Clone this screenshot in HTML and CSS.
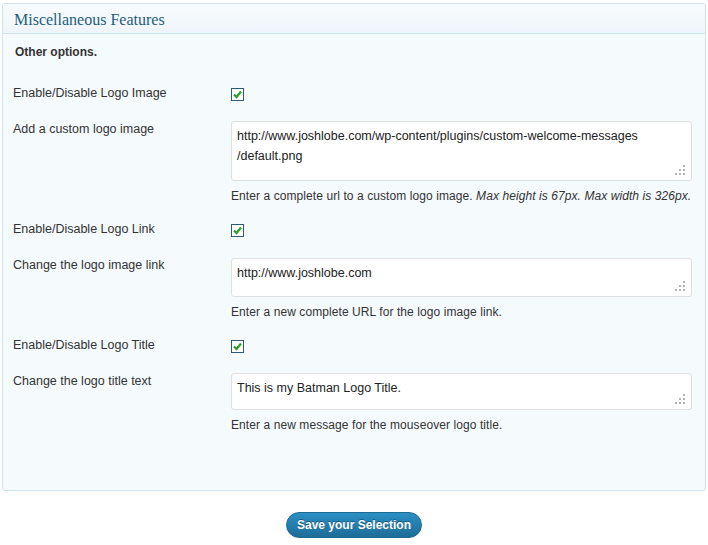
FILE: index.html
```html
<!DOCTYPE html>
<html>
<head>
<meta charset="utf-8">
<link rel="stylesheet" href="styles.css">
</head>
<body>
<div class="panel">
  <div class="panel-head"><h3>Miscellaneous Features</h3></div>
  <div class="panel-body">
    <p class="intro">Other options.</p>

    <div class="row row-check">
      <div class="label">Enable/Disable Logo Image</div>
      <div class="field"><span class="check"><svg viewBox="0 0 11 11" width="11" height="11"><path d="M2 5.5 L4.5 8 L9 2.5" fill="none" stroke="#2aa125" stroke-width="2.2"/></svg></span></div>
    </div>

    <div class="row row-text">
      <div class="label">Add a custom logo image</div>
      <div class="field">
        <div class="textarea ta-tall">http://www.joshlobe.com/wp-content/plugins/custom-welcome-messages<br>/default.png<svg class="grip" viewBox="0 0 10 10" width="10" height="10"><rect x="8" y="0" width="2" height="2"/><rect x="4" y="4" width="2" height="2"/><rect x="8" y="4" width="2" height="2"/><rect x="0" y="8" width="2" height="2"/><rect x="4" y="8" width="2" height="2"/><rect x="8" y="8" width="2" height="2"/></svg></div>
        <div class="desc">Enter a complete url to a custom logo image. <em>Max height is 67px. Max width is 326px.</em></div>
      </div>
    </div>

    <div class="row row-check">
      <div class="label">Enable/Disable Logo Link</div>
      <div class="field"><span class="check"><svg viewBox="0 0 11 11" width="11" height="11"><path d="M2 5.5 L4.5 8 L9 2.5" fill="none" stroke="#2aa125" stroke-width="2.2"/></svg></span></div>
    </div>

    <div class="row row-text">
      <div class="label">Change the logo image link</div>
      <div class="field">
        <div class="textarea ta-mid">http://www.joshlobe.com<svg class="grip" viewBox="0 0 10 10" width="10" height="10"><rect x="8" y="0" width="2" height="2"/><rect x="4" y="4" width="2" height="2"/><rect x="8" y="4" width="2" height="2"/><rect x="0" y="8" width="2" height="2"/><rect x="4" y="8" width="2" height="2"/><rect x="8" y="8" width="2" height="2"/></svg></div>
        <div class="desc">Enter a new complete URL for the logo image link.</div>
      </div>
    </div>

    <div class="row row-check">
      <div class="label">Enable/Disable Logo Title</div>
      <div class="field"><span class="check"><svg viewBox="0 0 11 11" width="11" height="11"><path d="M2 5.5 L4.5 8 L9 2.5" fill="none" stroke="#2aa125" stroke-width="2.2"/></svg></span></div>
    </div>

    <div class="row row-text">
      <div class="label">Change the logo title text</div>
      <div class="field">
        <div class="textarea ta-short">This is my Batman Logo Title.<svg class="grip" viewBox="0 0 10 10" width="10" height="10"><rect x="8" y="0" width="2" height="2"/><rect x="4" y="4" width="2" height="2"/><rect x="8" y="4" width="2" height="2"/><rect x="0" y="8" width="2" height="2"/><rect x="4" y="8" width="2" height="2"/><rect x="8" y="8" width="2" height="2"/></svg></div>
        <div class="desc">Enter a new message for the mouseover logo title.</div>
      </div>
    </div>
  </div>
</div>
<div class="actions"><button class="save">Save your Selection</button></div>
</body>
</html>
```

FILE: styles.css
```css
html, body {
  margin: 0;
  background: #ffffff;
}
body {
  padding: 3px 2px 0 2px;
  font-family: "Liberation Sans", Arial, sans-serif;
  font-size: 12px;
  color: #333333;
}
.panel {
  border: 1px solid #cfe3ec;
  border-radius: 3px;
  background: #f5fafd;
  height: 488px;
  box-sizing: border-box;
}
.panel-head {
  height: 29px;
  border-bottom: 1px solid #cfe3ec;
  background: linear-gradient(#f8fbfd, #eef5fa);
  border-radius: 3px 3px 0 0;
}
.panel-head h3 {
  margin: 0;
  padding: 6px 0 0 11px;
  font-family: "Liberation Serif", "Times New Roman", serif;
  font-weight: normal;
  font-size: 16px;
  line-height: 19px;
  color: #1f5e7a;
}
.panel-body {
  padding: 11px 14px 0 10px;
}
.intro {
  margin: 0 0 26px 2px;
  font-weight: bold;
  line-height: 15px;
  color: #333;
}
.row {
  display: flex;
}
.row-check {
  margin-bottom: 20px;
}
.row-text {
  margin-bottom: 18px;
}
.label {
  width: 218px;
  flex: none;
  font-size: 12.5px;
  line-height: 15px;
}
.row-text .label {
  padding-top: 1px;
}
.field {
  flex: 1;
}
.check {
  display: block;
  margin-top: 2px;
  width: 11px;
  height: 11px;
  border: 1px solid #2b5a7a;
  background: #fff;
}
.check svg {
  display: block;
}
.textarea {
  position: relative;
  box-sizing: border-box;
  width: 461px;
  background: #fff;
  border: 1px solid #dfdfdf;
  border-radius: 3px;
  padding: 4px 5px;
  font-size: 12.5px;
  line-height: 20px;
  color: #222;
}
.ta-tall { height: 60px; }
.ta-mid { height: 39px; margin-top: 1px; }
.ta-short { height: 37px; }
.grip {
  position: absolute;
  right: 6px;
  bottom: 5px;
  fill: #b5b5b5;
}
.desc {
  margin-top: 8px;
  line-height: 15px;
  letter-spacing: 0.08px;
  color: #333;
}
.desc em {
  font-style: italic;
}
.actions {
  display: flex;
  justify-content: center;
  padding-top: 21px;
}
.save {
  width: 136px;
  height: 26px;
  border: 1px solid #1d6a93;
  border-radius: 13px;
  background: linear-gradient(#2c8fc3, #1e6d98);
  color: #fff;
  font-family: "Liberation Sans", Arial, sans-serif;
  font-size: 12px;
  font-weight: bold;
  text-shadow: 0 -1px 0 #195a7e;
  padding: 0;
  cursor: pointer;
}
```
